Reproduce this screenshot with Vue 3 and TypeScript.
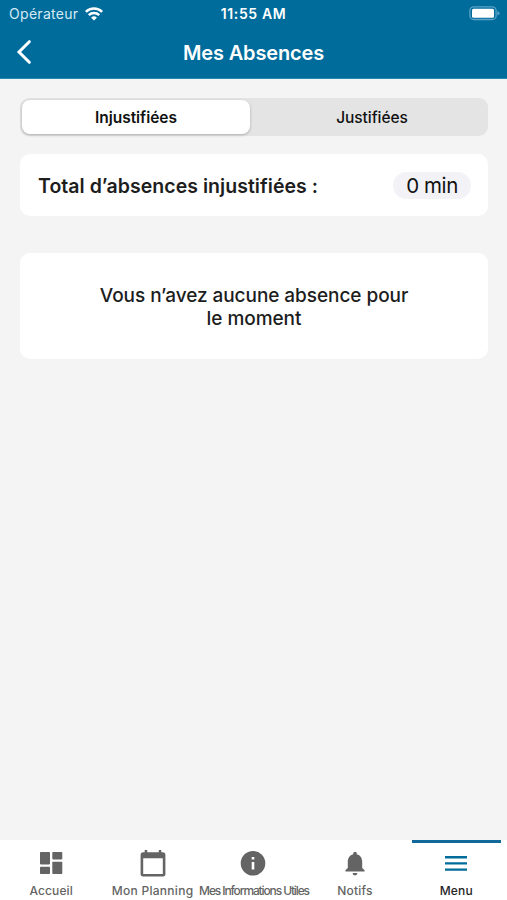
<script setup lang="ts">
import { ref } from 'vue'

type Tab = 'unjustified' | 'justified'
interface NavItem { id: string; label: string }

const tab = ref<Tab>('unjustified')
const current = ref('menu')
const nav: NavItem[] = [
  { id: 'home', label: 'Accueil' },
  { id: 'planning', label: 'Mon Planning' },
  { id: 'infos', label: 'Mes Informations Utiles' },
  { id: 'notifs', label: 'Notifs' },
  { id: 'menu', label: 'Menu' },
]
</script>

<template>
  <div class="screen">
    <header class="top">
      <div class="status">
        <div class="carrier">
          <span class="operator">Opérateur</span>
          <svg class="wifi" viewBox="0 0 18 14" width="18" height="14">
            <g fill="none" stroke="#fff" stroke-width="2.5">
              <path d="M.8 4.9a11.6 11.6 0 0 1 16.4 0" />
              <path d="M3.8 8.2a7.4 7.4 0 0 1 10.4 0" />
            </g>
            <path d="M9 13.6 6.1 10.7a4.1 4.1 0 0 1 5.8 0z" fill="#fff" />
          </svg>
        </div>
        <span class="clock">11:55 AM</span>
        <svg class="battery" viewBox="0 0 32 15" width="32" height="15">
          <rect x=".9" y=".9" width="26.2" height="12.6" rx="3.8" fill="none" stroke="#5ba3c6" stroke-width="1.3" />
          <rect x="3" y="2.8" width="22" height="9" rx="1.5" fill="#fff" />
          <path d="M28.4 5v4.5q2.2-.7 2.2-2.25T28.4 5z" fill="#5ba3c6" />
        </svg>
      </div>
      <div class="bar">
        <button class="back" aria-label="Retour">
          <svg viewBox="0 0 16 24" width="16" height="24">
            <path d="M13.3 1.7 3 12l10.3 10.3" fill="none" stroke="#fff" stroke-width="3" stroke-linecap="round" stroke-linejoin="miter" />
          </svg>
        </button>
        <h1 class="title">Mes Absences</h1>
      </div>
    </header>

    <main class="content">
      <div class="segments">
        <button class="segment first" :class="{ selected: tab === 'unjustified' }" @click="tab = 'unjustified'"><span>Injustifiées</span></button>
        <button class="segment second" :class="{ selected: tab === 'justified' }" @click="tab = 'justified'"><span>Justifiées</span></button>
      </div>
      <section class="card total">
        <span class="total-label">Total d’absences injustifiées :</span>
        <span class="pill"><span>0 min</span></span>
      </section>
      <section class="card empty">
        <p>Vous n’avez aucune absence pour<br />le moment</p>
      </section>
    </main>

    <nav class="tabs">
      <button v-for="item in nav" :key="item.id" class="tab" :class="[item.id, { active: current === item.id }]" @click="current = item.id">
        <svg class="icon" viewBox="0 0 30 30" width="30" height="30">
          <g v-if="item.id === 'home'" fill="currentColor">
            <rect x="4" y="4" width="10" height="12.4" rx=".8" />
            <rect x="16.3" y="4" width="10" height="7.4" rx=".8" />
            <rect x="4" y="18.7" width="10" height="7.4" rx=".8" />
            <rect x="16.3" y="13.7" width="10" height="12.4" rx=".8" />
          </g>
          <path v-else-if="item.id === 'planning'" fill="currentColor" fill-rule="evenodd" d="M6.7 2.1h2.5v2.2h11.6V2.1h2.5v2.2h1.6a2.5 2.5 0 0 1 2.5 2.5V26a2.5 2.5 0 0 1-2.5 2.5H5.1A2.5 2.5 0 0 1 2.6 26V6.8a2.5 2.5 0 0 1 2.5-2.5h1.6zM5.2 10.3V26h19.6V10.3z" />
          <path v-else-if="item.id === 'infos'" fill="currentColor" fill-rule="evenodd" d="M15 2.9a12.3 12.3 0 1 0 0 24.6 12.3 12.3 0 0 0 0-24.6zM13.7 9h2.6v2.5h-2.6zM13.7 14h2.6v7.4h-2.6z" />
          <path v-else-if="item.id === 'notifs'" fill="currentColor" d="M15 27.5a2.4 2.4 0 0 0 2.4-2.4h-4.8a2.4 2.4 0 0 0 2.4 2.4zM22.2 19.9v-6c0-3.7-1.9-6.8-5.4-7.6v-.8a1.8 1.8 0 1 0-3.6 0v.8c-3.4.8-5.4 3.9-5.4 7.6v6l-2.4 2.4v1.2h19.2v-1.2z" />
          <path v-else fill="none" stroke="currentColor" stroke-width="2.4" d="M4 9.2h22M4 15.4h22M4 21.6h22" />
        </svg>
        <span class="label">{{ item.label }}</span>
      </button>
    </nav>
  </div>
</template>

<style>
body {
  margin: 0;
}
</style>

<style scoped>
.screen {
  display: flex;
  flex-direction: column;
  width: 507px;
  height: 900px;
  overflow: hidden;
  background: #f4f4f4;
  color: #1d1d1d;
  font-family: Inter, "Liberation Sans", sans-serif;
  white-space: nowrap;
}
button {
  border: 0;
  padding: 0;
  background: none;
  font: inherit;
  color: inherit;
}
svg {
  display: block;
}
.top {
  height: 79px;
  flex: none;
  box-sizing: border-box;
  background: #006c9c;
  border-bottom: 1px solid #278ab5;
  color: #fff;
}
.status {
  display: grid;
  grid-template-columns: 1fr auto 1fr;
  align-items: center;
  height: 27px;
  padding: 0 6px 0 9px;
}
.carrier {
  display: flex;
  align-items: center;
  gap: 6px;
}
.operator {
  width: 70px;
  font-size: 14px;
  letter-spacing: 0.3px;
  color: #d5ebf5;
}
.clock {
  margin-right: 3px;
  font-size: 14px;
  font-weight: 600;
  letter-spacing: 0.65px;
}
.battery {
  justify-self: end;
}
.bar {
  display: grid;
  grid-template-columns: 40px 1fr 40px;
  align-items: center;
  height: 50px;
}
.back {
  padding-left: 16px;
}
.title {
  margin: 0;
  padding-top: 1px;
  text-align: center;
  font-size: 20px;
  font-weight: 600;
  line-height: 24px;
  letter-spacing: -0.15px;
}
.content {
  flex: 1;
  padding: 19px 19px 0 20px;
}
.segments {
  display: grid;
  grid-template-columns: 231px 1fr;
  height: 38px;
  border-radius: 9px;
  background: #e4e4e4;
}
.segment {
  border-radius: 8px;
  font-size: 15.5px;
  font-weight: 500;
  letter-spacing: -0.05px;
  color: #111;
}
.second {
  padding-left: 5px;
}
.segment.selected {
  margin: 2px 1px 2px 2px;
  background: #fff;
  box-shadow: 0 1px 3px rgba(0, 0, 0, 0.25);
  font-weight: 600;
}
.card {
  box-sizing: border-box;
  border-radius: 10px;
  background: #fff;
}
.total {
  display: flex;
  align-items: center;
  justify-content: space-between;
  height: 62px;
  margin-top: 18px;
  padding: 1px 17px 0 18px;
}
.total-label {
  font-size: 19.5px;
  font-weight: 600;
  letter-spacing: 0.04px;
}
.pill {
  display: flex;
  align-items: center;
  justify-content: center;
  width: 78px;
  height: 27px;
  border-radius: 14px;
  background: #f2f2f7;
  font-size: 20.5px;
  letter-spacing: -0.4px;
  color: #111;
}
.empty {
  height: 106px;
  margin-top: 37px;
  padding-top: 31px;
  text-align: center;
}
.empty p {
  margin: 0;
  font-size: 19px;
  font-weight: 500;
  line-height: 23px;
  letter-spacing: -0.06px;
}
.tabs {
  display: grid;
  grid-template-columns: repeat(5, 1fr);
  flex: none;
  height: 60px;
  box-sizing: border-box;
  background: #fff;
}
.tab {
  display: flex;
  flex-direction: column;
  align-items: center;
  box-sizing: border-box;
  min-width: 0;
  padding-top: 5px;
  border-top: 3px solid transparent;
  color: #646464;
}
.tab.active {
  margin: 0 6px;
  border-top-color: #10699a;
  color: #006c9c;
}
.icon {
  height: 30px;
  flex: none;
}
.planning .icon {
  margin-left: 1px;
}
.label {
  margin-top: 5px;
  font-size: 12px;
  font-weight: 500;
  line-height: 16px;
  letter-spacing: 0.2px;
}
.home .label {
  letter-spacing: 0.1px;
  margin-left: 1px;
}
.planning .label {
  margin-left: 1px;
  letter-spacing: 0.27px;
}
.infos .label {
  margin-left: 1px;
  letter-spacing: -1.12px;
}
.active .label {
  color: #252525;
}
</style>
